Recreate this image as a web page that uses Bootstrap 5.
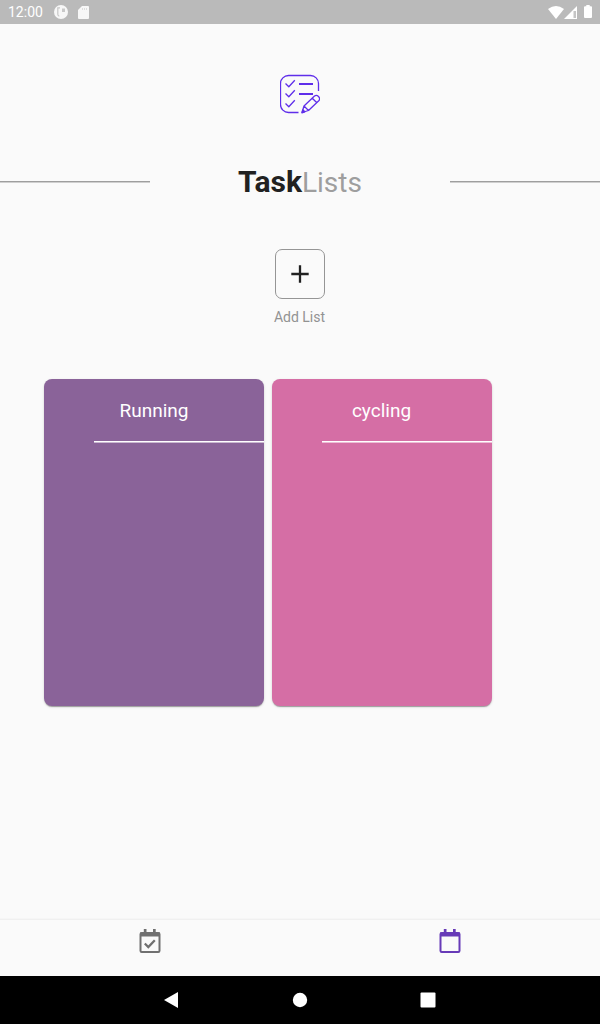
<!DOCTYPE html>
<html lang="en">
<head>
<meta charset="utf-8">
<meta name="viewport" content="width=device-width, initial-scale=1">
<title>Task Lists</title>
<link href="https://cdn.jsdelivr.net/npm/bootstrap@5.3.0/dist/css/bootstrap.min.css" rel="stylesheet">
<style>
body { font-family: Roboto, sans-serif; background: #fafafa; color: #212121; }
svg { display: block; }
.status-bar { height: 24px; background: #bababa; color: #fff; font-size: 14px; line-height: 24px; padding: 0 8px; }
.app-logo { margin-top: 50px; }
.title-row { margin-top: 47px; height: 40px; }
.title-rule { height: 0; border-top: 1px solid #9e9e9e; box-shadow: 0 1px 0 #cfcfcf; width: 150px; }
.app-title { font-size: 28px; line-height: 38px; padding-top: 2px; color: #9e9e9e; font-weight: 400; }
.app-title b { font-size: 30px; color: #212121; font-weight: 700; }
.add-btn { width: 50px; height: 50px; margin-top: 48px; border: 1px solid #959595; border-radius: 7px; background: transparent; }
.add-label { margin-top: 8px; padding-right: 1px; font-size: 14px; line-height: 20px; color: #929292; }
.lists { margin-top: 52px; padding-left: 44px; gap: 8px; }
.list-card { width: 220px; height: 327px; border: 0; border-radius: 8px; color: #fff; box-shadow: 0 2px 1px -1px rgba(0,0,0,.2), 0 1px 1px rgba(0,0,0,.14), 0 1px 3px rgba(0,0,0,.12); }
.purple { background: #8a6399; }
.pink { background: #d56ea5; }
.list-name { font-size: 19px; line-height: 24px; margin: 20px 0 18px; font-weight: 400; text-align: center; }
.pink .list-name { padding-right: 1px; }
.list-rule { margin-left: 50px; height: 2px; background: linear-gradient(#fff 50%, rgba(255,255,255,.55) 50%); }
.tabs { height: 57px; border-top: 1px solid #f0f0f0; box-shadow: 0 -1px 0 #f6f6f6; padding-top: 9px; }
.sys-nav { height: 48px; background: #000; }
</style>
</head>
<body>
<div class="vh-100 d-flex flex-column overflow-hidden">
  <header class="status-bar d-flex align-items-center flex-shrink-0">
    <span>12:00</span>
    <svg width="14" height="14" viewBox="0 0 14 14" style="margin-left:11px"><circle cx="7" cy="7" r="7" fill="#f7f7f7"/><path d="M6 2.800H3.800v6.400q0 1.500 1.500 2" stroke="#c6c6c6" stroke-width="1.200" fill="none"/><path d="M8 3.500h3v3.500H8z" fill="#c8c8c8"/></svg>
    <svg width="11" height="13" viewBox="0 0 11 13" style="margin-left:10px"><path d="M4 0h6q1 0 1 1v11q0 1-1 1H1q-1 0-1-1V4z" fill="#f7f7f7"/><path d="M4.500 2v2M6.500 2v2M8.500 2v2" stroke="#ddd"/></svg>
    <svg class="ms-auto" width="16" height="13" viewBox="0 0 16 13"><path d="M0 3Q8-3 16 3L8 13z" fill="#fff"/></svg>
    <svg width="13" height="13" viewBox="0 0 13 13"><path d="M0 13L13 0v13z" fill="#fff"/><path d="M9.500 5h2.500v7H9.500z" fill="#c5c5c5"/></svg>
    <svg width="8" height="13" viewBox="0 0 8 13" style="margin-left:7px;margin-top:-2px"><path d="M2.300 0h3.400v1.200H7q1 0 1 1V12q0 1-1 1H1q-1 0-1-1V2.200q0-1 1-1h1.300z" fill="#fff"/></svg>
  </header>
  <main class="d-flex flex-column align-items-center flex-grow-1">
    <svg class="app-logo" width="40" height="40" viewBox="0 0 40 40" fill="none" stroke="#5f2eea" stroke-width="1.300" stroke-linejoin="round">
      <path d="M18.500 38.500H8.500a8 8 0 0 1-8-8V9.500a8 8 0 0 1 8-8H30.500a8 8 0 0 1 8 8v7.500"/>
      <path d="M5.500 9.500l3.300 3.300 6-6.500M5.500 19.500l3.300 3.300 6-6.500M5.500 29.500l3.300 3.300 6-6.500"/>
      <path d="M19 10H33M19 20H33" stroke-width="2"/>
      <path d="M22 38.500l2-6.500L34.500 22q2-1.500 4 .5t.5 4L28.500 36.500zM24 32l4.500 4.500M32.300 24.300l4.500 4.500"/>
      <path d="M22 38.800l.8-3 2 2z" fill="#5f2eea"/>
    </svg>
    <div class="title-row w-100 d-flex align-items-center justify-content-between">
      <div class="title-rule"></div>
      <h1 class="app-title m-0 text-nowrap"><b>Task</b>Lists</h1>
      <div class="title-rule"></div>
    </div>
    <button class="add-btn d-flex align-items-center justify-content-center p-0" aria-label="Add list">
      <svg width="18" height="18" viewBox="0 0 18 18"><path d="M9 .3v17.400M.3 9h17.400" stroke="#212121" stroke-width="2.300"/></svg>
    </button>
    <div class="add-label">Add List</div>
    <section class="lists w-100 d-flex">
      <article class="card list-card purple"><h2 class="list-name">Running</h2><div class="list-rule"></div></article>
      <article class="card list-card pink"><h2 class="list-name">cycling</h2><div class="list-rule"></div></article>
    </section>
  </main>
  <nav class="tabs row g-0 flex-shrink-0">
    <a class="col-6 d-flex justify-content-center" href="#" aria-label="Tasks">
      <svg width="22" height="25" viewBox="0 0 22 25"><path d="M4.800 0h2.700v3H4.800zM14 0h2.700v3H14z" fill="#707070"/><rect x="1.500" y="4" width="19" height="19" rx="1.200" fill="none" stroke="#707070" stroke-width="2"/><path d="M1 3.500h20v4H1z" fill="#707070"/><path d="M5.800 14.500l3.500 3.500 6.500-6.800" fill="none" stroke="#707070" stroke-width="2.300"/></svg>
    </a>
    <a class="col-6 d-flex justify-content-center" href="#" aria-label="Lists">
      <svg width="22" height="25" viewBox="0 0 22 25"><path d="M4.800 0h2.700v3H4.800zM14 0h2.700v3H14z" fill="#673ab7"/><rect x="1.500" y="4" width="19" height="19" rx="1.200" fill="none" stroke="#673ab7" stroke-width="2"/><path d="M1 3.500h20v4H1z" fill="#673ab7"/></svg>
    </a>
  </nav>
  <footer class="sys-nav d-flex align-items-center justify-content-center flex-shrink-0">
    <svg width="272" height="16" viewBox="0 0 272 16" fill="#fff"><path d="M0 8L14 0v16z"/><circle cx="136" cy="8" r="7.200"/><rect x="256.500" y=".5" width="15" height="15" rx="1"/></svg>
  </footer>
</div>
<script src="https://cdn.jsdelivr.net/npm/bootstrap@5.3.0/dist/js/bootstrap.bundle.min.js"></script>
</body>
</html>
